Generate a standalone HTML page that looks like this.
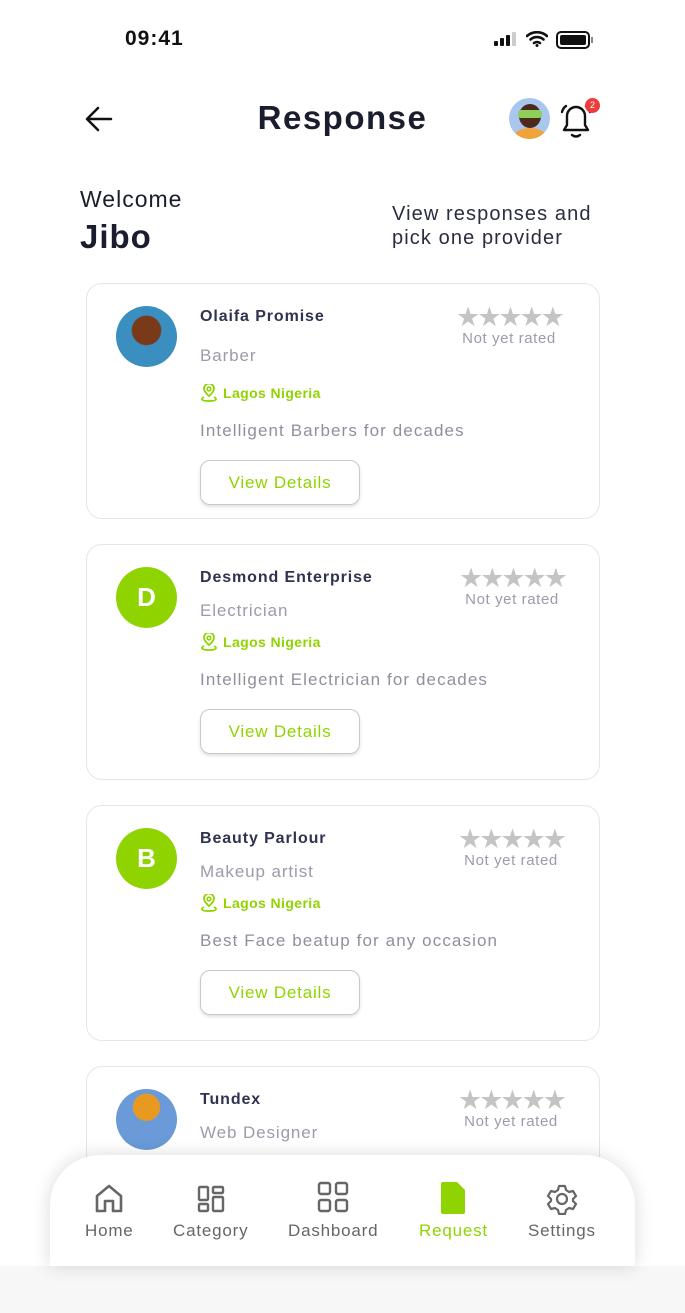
<!DOCTYPE html>
<html><head><meta charset="utf-8"><style>
*{margin:0;padding:0;box-sizing:border-box}
body{width:685px;height:1313px;overflow:hidden;background:#fff;font-family:"Liberation Sans",sans-serif;position:relative;color:#1a1d2e}
.abs{position:absolute}
.card{position:absolute;left:86px;width:514px;height:236px;border:1.5px solid #e3e6ec;border-radius:16px;background:#fff}
.av{position:absolute;left:29px;top:22px;width:61px;height:61px;border-radius:50%;background:#8fd400;color:#fff;font-weight:bold;font-size:26px;display:flex;align-items:center;justify-content:center}
.name{position:absolute;left:113px;top:24px;font-size:16px;font-weight:bold;color:#2f3350;letter-spacing:.9px}
.job{position:absolute;left:113px;font-size:17px;color:#9a9cab;letter-spacing:.9px}
.loc{position:absolute;left:113px;font-size:14px;font-weight:bold;color:#8fd400;display:flex;align-items:center;gap:5px;letter-spacing:.4px}
.desc{position:absolute;left:113px;font-size:17px;color:#8e909c;letter-spacing:1.1px}
.btn{position:absolute;left:113px;width:160px;height:45px;border:1.5px solid #c8c8c8;border-radius:10px;box-shadow:0 2px 3px rgba(0,0,0,.12);color:#8fd400;font-size:17px;letter-spacing:.8px;display:flex;align-items:center;justify-content:center}
.stars{position:absolute;right:28px;top:20px;width:124px;text-align:center}
.stars .s{color:#c4c4c4;font-size:27px;letter-spacing:-3px;line-height:26px}
.stars .t{color:#9a9cab;font-size:15px;letter-spacing:.6px}
.nav{position:absolute;left:50px;top:1155px;width:585px;height:111px;background:#fff;border-radius:50px 50px 0 0;box-shadow:0 0 18px rgba(0,0,0,.15)}
.ni{position:absolute;top:28px;text-align:center;font-size:17px;color:#666;letter-spacing:.8px}
.ni svg{display:block;margin:0 auto 6px}
</style></head><body>
<div class="abs" style="left:125px;top:27px;font-size:21px;font-weight:bold;color:#111;letter-spacing:1px">09:41</div>
<div class="abs" style="left:494px;top:32px;display:flex;align-items:flex-end;gap:2px">
<div style="width:4px;height:5px;background:#111;border-radius:1px"></div><div style="width:4px;height:8px;background:#111;border-radius:1px"></div><div style="width:4px;height:11px;background:#111;border-radius:1px"></div><div style="width:4px;height:14px;background:#ccc;border-radius:1px"></div></div>
<svg class="abs" style="left:526px;top:31px" width="22" height="16" viewBox="0 0 22 16"><path d="M1 5a15 15 0 0 1 20 0M4.5 8.5a10 10 0 0 1 13 0M8 12a5 5 0 0 1 6 0" stroke="#111" stroke-width="2.6" fill="none" stroke-linecap="round"/><circle cx="11" cy="14.5" r="1.5" fill="#111"/></svg>
<div class="abs" style="left:556px;top:31px;width:34px;height:18px;border:2px solid #111;border-radius:5px;padding:2px"><div style="background:#111;width:100%;height:100%;border-radius:2px"></div></div>
<div class="abs" style="left:591px;top:37px;width:2px;height:6px;background:#888"></div>
<svg class="abs" style="left:85px;top:106px" width="28" height="26" viewBox="0 0 28 26"><path d="M26 13H3M13 2 2 13l11 11" stroke="#111" stroke-width="2.5" fill="none" stroke-linecap="round" stroke-linejoin="round"/></svg>
<div class="abs" style="left:0;width:685px;top:99px;text-align:center;font-size:33px;font-weight:bold;color:#1a1d2e;letter-spacing:1.5px">Response</div>
<div class="abs" style="left:509px;top:98px;width:41px;height:41px;border-radius:50%;background:#a9c6ef;overflow:hidden"><div style="position:absolute;left:10px;top:6px;width:22px;height:24px;border-radius:50%;background:#4a2a1a"></div><div style="position:absolute;left:9px;top:12px;width:24px;height:8px;background:#8dcf5a;border-radius:3px"></div><div style="position:absolute;left:4px;top:30px;width:34px;height:20px;border-radius:50%;background:#f2a23a"></div></div>
<svg class="abs" style="left:558px;top:102px" width="36" height="38" viewBox="0 0 36 38"><path d="M6 28h24l-3-5v-9a9 9 0 0 0-18 0v9zM14 33q4 3 8 0M4 10q1-4 4-6M32 10q-1-4-4-6" stroke="#111" stroke-width="2.4" fill="none" stroke-linecap="round" stroke-linejoin="round"/></svg>
<div class="abs" style="left:585px;top:98px;width:15px;height:15px;border-radius:50%;background:#ee3b3b;color:#fff;font-size:9px;text-align:center;line-height:15px">2</div>
<div class="abs" style="left:80px;top:186px;font-size:23px;color:#1a1d2e;letter-spacing:1px">Welcome</div>
<div class="abs" style="left:80px;top:218px;font-size:33px;font-weight:bold;color:#1a1d2e;letter-spacing:1px">Jibo</div>
<div class="abs" style="left:392px;top:202px;font-size:20px;line-height:24px;color:#2a2d3e;letter-spacing:1.1px;white-space:nowrap">View responses and<br>pick one provider</div>

<div class="card" style="top:283px">
<div class="av" style="background:radial-gradient(circle at 50% 40%,#7a3a1a 30%,#3a8ec0 32%)"></div>
<div class="name">Olaifa Promise</div>
<div class="stars"><div class="s">★★★★★</div><div class="t">Not yet rated</div></div>
<div class="job" style="top:62px">Barber</div>
<div class="loc" style="top:100px"><svg width="18" height="18" viewBox="0 0 18 18"><path d="M9 12s5-4 5-7.5a5 5 0 0 0-10 0C4 8 9 12 9 12z M4 13q-2 1-2 2 0 2 7 2t7-2q0-1-2-2" stroke="#8fd400" stroke-width="1.8" fill="none"/><circle cx="9" cy="5" r="1.8" stroke="#8fd400" stroke-width="1.6" fill="none"/></svg>Lagos Nigeria</div>
<div class="desc" style="top:137px">Intelligent Barbers for decades</div>
<div class="btn" style="top:176px">View Details</div>
</div>

<div class="card" style="top:544px">
<div class="av">D</div>
<div class="name">Desmond Enterprise</div>
<div class="stars" style="right:25px"><div class="s">★★★★★</div><div class="t">Not yet rated</div></div>
<div class="job" style="top:56px">Electrician</div>
<div class="loc" style="top:88px"><svg width="18" height="18" viewBox="0 0 18 18"><path d="M9 12s5-4 5-7.5a5 5 0 0 0-10 0C4 8 9 12 9 12z M4 13q-2 1-2 2 0 2 7 2t7-2q0-1-2-2" stroke="#8fd400" stroke-width="1.8" fill="none"/><circle cx="9" cy="5" r="1.8" stroke="#8fd400" stroke-width="1.6" fill="none"/></svg>Lagos Nigeria</div>
<div class="desc" style="top:125px">Intelligent Electrician for decades</div>
<div class="btn" style="top:164px">View Details</div>
</div>

<div class="card" style="top:805px">
<div class="av">B</div>
<div class="name">Beauty Parlour</div>
<div class="stars" style="right:26px"><div class="s">★★★★★</div><div class="t">Not yet rated</div></div>
<div class="job" style="top:56px">Makeup artist</div>
<div class="loc" style="top:88px"><svg width="18" height="18" viewBox="0 0 18 18"><path d="M9 12s5-4 5-7.5a5 5 0 0 0-10 0C4 8 9 12 9 12z M4 13q-2 1-2 2 0 2 7 2t7-2q0-1-2-2" stroke="#8fd400" stroke-width="1.8" fill="none"/><circle cx="9" cy="5" r="1.8" stroke="#8fd400" stroke-width="1.6" fill="none"/></svg>Lagos Nigeria</div>
<div class="desc" style="top:125px">Best Face beatup for any occasion</div>
<div class="btn" style="top:164px">View Details</div>
</div>

<div class="card" style="top:1066px">
<div class="av" style="background:radial-gradient(circle at 50% 30%,#e89a20 25%,#6a9ad8 27%)"></div>
<div class="name">Tundex</div>
<div class="stars" style="right:26px"><div class="s">★★★★★</div><div class="t">Not yet rated</div></div>
<div class="job" style="top:56px">Web Designer</div>
</div>

<div class="abs" style="left:0;top:1266px;width:685px;height:47px;background:#f7f7f7"></div>
<div class="nav">
<div class="ni" style="left:35px"><svg width="32" height="32" viewBox="0 0 32 32"><path d="M4 28V13L16 3l12 10v15h-8V18h-8v10z" stroke="#666" stroke-width="2.6" fill="none" stroke-linejoin="round"/></svg>Home</div>
<div class="ni" style="left:123px"><svg width="32" height="32" viewBox="0 0 32 32"><rect x="4" y="4" width="9" height="13" rx="1" stroke="#666" stroke-width="2.4" fill="none"/><rect x="18" y="4" width="10" height="6" rx="1" stroke="#666" stroke-width="2.4" fill="none"/><rect x="4" y="21" width="9" height="7" rx="1" stroke="#666" stroke-width="2.4" fill="none"/><rect x="18" y="14" width="10" height="14" rx="1" stroke="#666" stroke-width="2.4" fill="none"/></svg>Category</div>
<div class="ni" style="left:238px;top:24px"><svg width="34" height="36" viewBox="0 0 34 34"><rect x="3" y="3" width="11" height="11" rx="2" stroke="#666" stroke-width="2.4" fill="none"/><rect x="20" y="3" width="11" height="11" rx="2" stroke="#666" stroke-width="2.4" fill="none"/><rect x="3" y="20" width="11" height="11" rx="2" stroke="#666" stroke-width="2.4" fill="none"/><rect x="20" y="20" width="11" height="11" rx="2" stroke="#666" stroke-width="2.4" fill="none"/></svg>Dashboard</div>
<div class="ni" style="left:369px;top:26px;color:#8fd400"><svg width="26" height="34" viewBox="0 0 26 34"><path d="M3 1h14l8 8v22a2 2 0 0 1-2 2H3a2 2 0 0 1-2-2V3a2 2 0 0 1 2-2z" fill="#8fd400"/></svg>Request</div>
<div class="ni" style="left:478px"><svg width="32" height="32" viewBox="0 0 32 32"><path d="M13 3h6l1 4 3 2 4-1 3 5-3 3v2l3 3-3 5-4-1-3 2-1 4h-6l-1-4-3-2-4 1-3-5 3-3v-2l-3-3 3-5 4 1 3-2z" stroke="#666" stroke-width="2.2" fill="none" stroke-linejoin="round"/><circle cx="16" cy="16" r="5" stroke="#666" stroke-width="2.2" fill="none"/></svg>Settings</div>
</div>
</body></html>
